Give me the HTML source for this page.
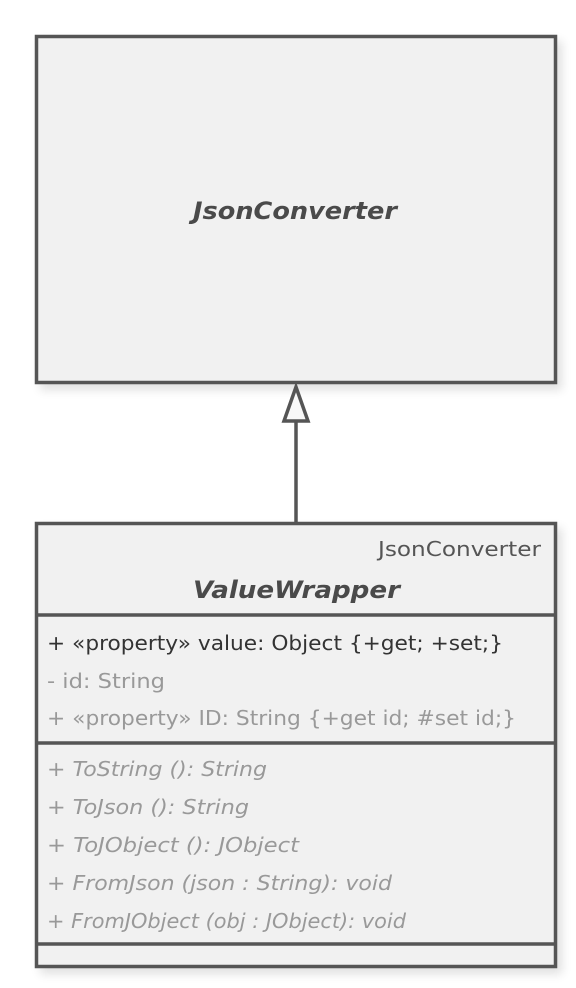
<!DOCTYPE html>
<html><head><style>
html,body{margin:0;padding:0;background:#fff;width:576px;height:988px;overflow:hidden}
svg{display:block}
text{font-family:"DejaVu Sans","Liberation Sans",sans-serif}
</style></head><body>
<svg width="576" height="988" viewBox="0 0 576 988">
<defs><filter id="sh" x="-10%" y="-10%" width="120%" height="120%"><feGaussianBlur stdDeviation="5"/></filter></defs>
<rect x="40" y="41" width="522" height="349" fill="#000" opacity="0.12" filter="url(#sh)"/>
<rect x="40" y="528" width="522" height="446" fill="#000" opacity="0.12" filter="url(#sh)"/>
<rect x="36.5" y="36.5" width="519" height="346" fill="#f1f1f1" stroke="#555" stroke-width="3.5"/>
<text x="193" y="219" font-size="24" font-weight="bold" font-style="italic" fill="#4a4a4a" textLength="204" lengthAdjust="spacingAndGlyphs">JsonConverter</text>
<line x1="296" y1="421" x2="296" y2="523" stroke="#555" stroke-width="3.5"/>
<polygon points="296,387 284,421 308,421" fill="#f8f8f8" stroke="#555" stroke-width="3.5" stroke-linejoin="miter"/>
<rect x="36.5" y="523.5" width="519" height="443" fill="#f1f1f1" stroke="#555" stroke-width="3.5"/>
<text x="378" y="556" font-size="20" fill="#555" textLength="163" lengthAdjust="spacingAndGlyphs">JsonConverter</text>
<text x="193" y="598" font-size="24" font-weight="bold" font-style="italic" fill="#4a4a4a" textLength="207" lengthAdjust="spacingAndGlyphs">ValueWrapper</text>
<line x1="36" y1="615" x2="556" y2="615" stroke="#555" stroke-width="3.5"/>
<g font-size="20">
<text x="47" y="650" fill="#333" textLength="456" lengthAdjust="spacingAndGlyphs">+ «property» value: Object {+get; +set;}</text>
<text x="47" y="688" fill="#999" textLength="118" lengthAdjust="spacingAndGlyphs">- id: String</text>
<text x="47" y="725" fill="#999" textLength="469" lengthAdjust="spacingAndGlyphs">+ «property» ID: String {+get id; #set id;}</text>
</g>
<line x1="36" y1="743" x2="556" y2="743" stroke="#555" stroke-width="3.5"/>
<g font-size="20" font-style="italic" fill="#999">
<text x="47" y="776" textLength="220" lengthAdjust="spacingAndGlyphs">+ ToString (): String</text>
<text x="47" y="814" textLength="202" lengthAdjust="spacingAndGlyphs">+ ToJson (): String</text>
<text x="47" y="852" textLength="252" lengthAdjust="spacingAndGlyphs">+ ToJObject (): JObject</text>
<text x="47" y="890" textLength="345" lengthAdjust="spacingAndGlyphs">+ FromJson (json : String): void</text>
<text x="47" y="928" textLength="359" lengthAdjust="spacingAndGlyphs">+ FromJObject (obj : JObject): void</text>
</g>
<line x1="36" y1="944" x2="556" y2="944" stroke="#555" stroke-width="3.5"/>
</svg>
</body></html>
